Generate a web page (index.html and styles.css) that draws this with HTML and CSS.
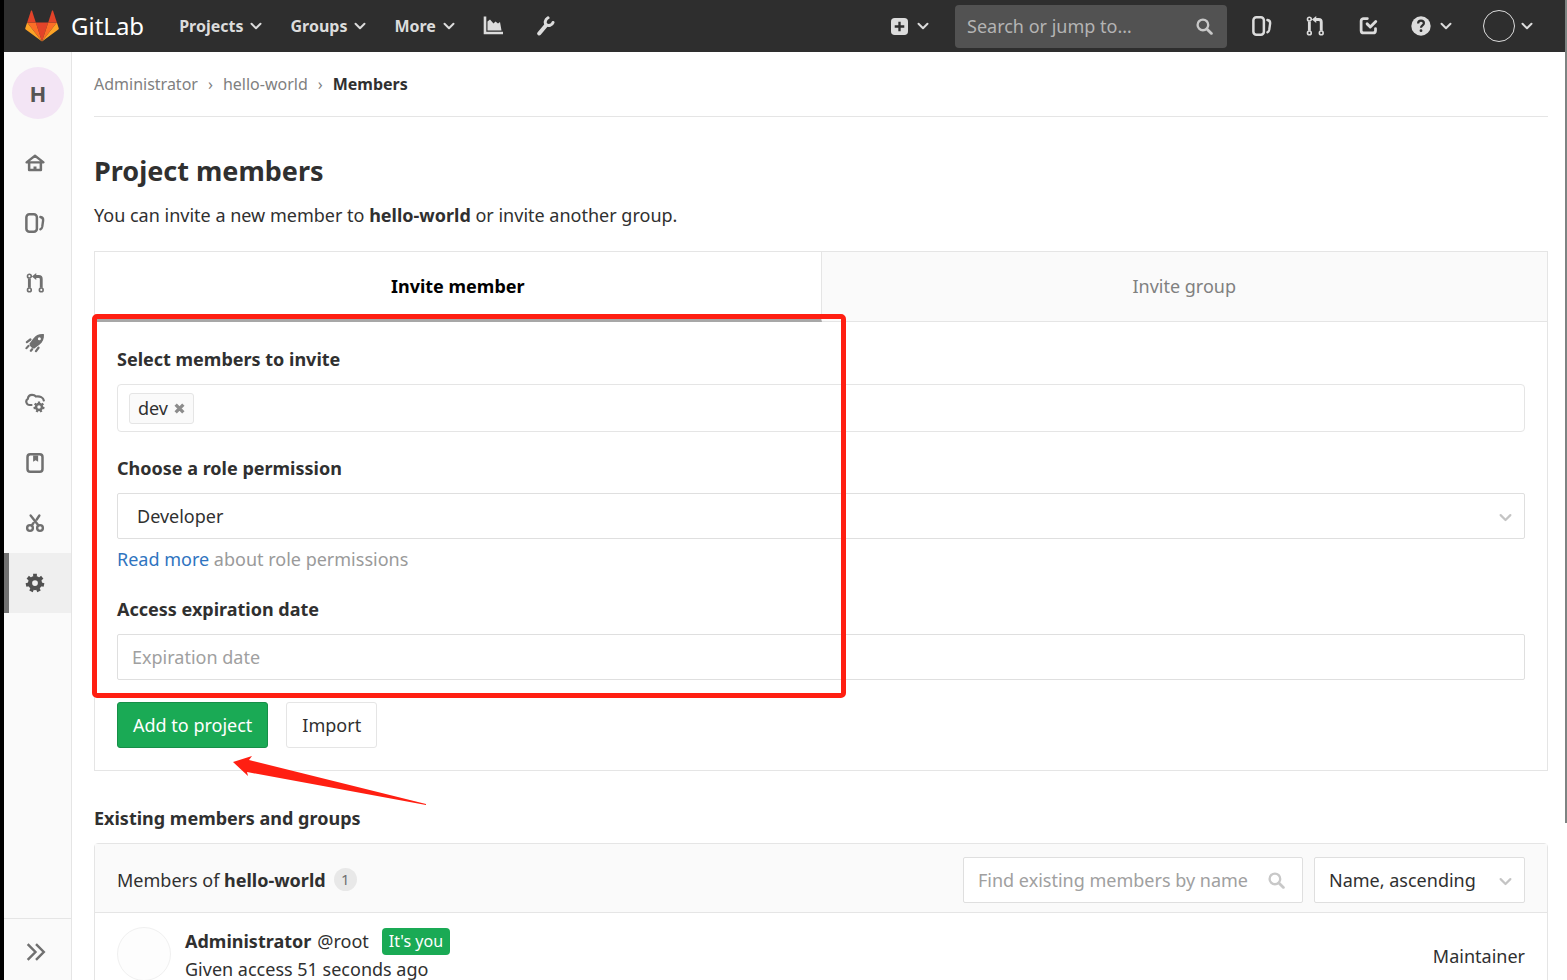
FILE: index.html
```
<!DOCTYPE html>
<html lang="en">
<head>
<meta charset="utf-8">
<title>Members · hello-world · GitLab</title>
<link rel="stylesheet" href="styles.css">
</head>
<body>
<svg class="sprite" aria-hidden="true">
  <symbol id="chevron" viewBox="0 0 12 12"><path d="M1.500 3.800 6 8.300l4.500-4.500" fill="none" stroke="currentColor" stroke-width="2" stroke-linecap="round" stroke-linejoin="round"/></symbol>
  <symbol id="issues" viewBox="0 0 16 16"><rect x="1.100" y="1" width="8.400" height="14" rx="2.400" fill="none" stroke="currentColor" stroke-width="2"/><path d="M12.300 3.200c1.500.3 2.400 1.200 2.200 2.800l-.7 4.900c-.2 1.200-.7 1.900-1.500 2.200" fill="none" stroke="currentColor" stroke-width="1.900" stroke-linecap="round"/></symbol>
  <symbol id="merge" viewBox="0 0 16 16"><g fill="none" stroke="currentColor"><circle cx="3.500" cy="2.500" r="1.500" stroke-width="1.300"/><circle cx="3.500" cy="13.500" r="1.500" stroke-width="1.300"/><circle cx="13" cy="13.500" r="1.500" stroke-width="1.300"/><path d="M3.500 4.300v7.400M8 2.800h3A2 2 0 0 1 13 4.800v6.900" stroke-width="2.300"/></g><path d="M5.500 2.800 9 0v5.600z" fill="currentColor"/></symbol>
  <symbol id="search" viewBox="0 0 16 16"><circle cx="6.500" cy="6.500" r="5" fill="none" stroke="currentColor" stroke-width="2.200"/><path d="m10.500 10.500 4 4" stroke="currentColor" stroke-width="2.600" stroke-linecap="round"/></symbol>
  <symbol id="gear" viewBox="0 0 16 16"><g fill="none" stroke="currentColor"><circle cx="8" cy="8" r="4" stroke-width="3.400"/><path d="M8 3V.6M11.900 4.900l1.900-1.500M12.900 9.100l2.300.5M10.200 12.500l1 2.200M5.800 12.500l-1 2.200M3.100 9.100l-2.300.5M4.100 4.900 2.200 3.400" stroke-width="3"/></g></symbol>
</svg>

<header class="topbar">
  <a class="brand" href="#">
    <svg class="brand-logo" viewBox="0 0 36 34" aria-hidden="true">
      <path fill="#e24329" d="m18 33.500 6.600-20.300H11.400z"/>
      <path fill="#fc6d26" d="M18 33.500 11.400 13.200H2.200z"/>
      <path fill="#fca326" d="m2.200 13.200-2 6.100c-.2.600 0 1.200.5 1.500L18 33.500z"/>
      <path fill="#e24329" d="M2.200 13.200h9.200L7.500 1.100c-.2-.6-1.100-.6-1.300 0z"/>
      <path fill="#fc6d26" d="m18 33.500 6.600-20.300h9.200z"/>
      <path fill="#fca326" d="m33.800 13.200 2 6.100c.2.600 0 1.200-.5 1.500L18 33.500z"/>
      <path fill="#e24329" d="M33.800 13.200h-9.200l3.900-12.100c.2-.6 1.100-.6 1.300 0z"/>
    </svg>
    <span class="brand-name">GitLab</span>
  </a>
  <nav class="main-nav" aria-label="Main">
    <button class="nav-button" type="button">Projects <svg class="caret"><use href="#chevron"/></svg></button>
    <button class="nav-button" type="button">Groups <svg class="caret"><use href="#chevron"/></svg></button>
    <button class="nav-button" type="button">More <svg class="caret"><use href="#chevron"/></svg></button>
    <a class="nav-icon" href="#" aria-label="Instance statistics"><svg class="icon" viewBox="0 0 20 20"><path d="M2 .5v16.500h18" fill="none" stroke="currentColor" stroke-width="2.600"/><path fill="currentColor" d="M4.500 14.500v-9L7 3.500l3.500 4 2-2 2.500 2 2-1.500 1.500 8.500z"/></svg></a>
    <a class="nav-icon" href="#" aria-label="Admin area"><svg class="icon" viewBox="0 0 20 20"><g fill="none" stroke="currentColor" stroke-linecap="round"><path d="m10.500 10-6.300 7.500" stroke-width="4"/><path d="M13 1.800C10 3.500 9.400 7.300 11.400 8.800c2 1.500 5.600.6 6.600-2.300" stroke-width="3"/></g></svg></a>
  </nav>
  <div class="tools">
    <button class="tool-button" type="button" aria-label="New"><svg class="icon-new" viewBox="0 0 16 16"><path fill="currentColor" fill-rule="evenodd" d="M3.500 0h9A3.500 3.500 0 0 1 16 3.500v9a3.500 3.500 0 0 1-3.500 3.500h-9A3.500 3.500 0 0 1 0 12.500v-9A3.500 3.500 0 0 1 3.500 0zM6.900 3.500v3.400H3.500v2.200h3.400v3.400h2.200V9.100h3.400V6.900H9.100V3.500z"/></svg><svg class="caret"><use href="#chevron"/></svg></button>
    <div class="top-search">
      <input class="top-search-input" type="text" placeholder="Search or jump to…" aria-label="Search or jump to">
      <svg class="search-icon"><use href="#search"/></svg>
    </div>
    <a class="tool-link" href="#" aria-label="Issues"><svg class="icon"><use href="#issues"/></svg></a>
    <a class="tool-link" href="#" aria-label="Merge requests"><svg class="icon"><use href="#merge"/></svg></a>
    <a class="tool-link" href="#" aria-label="To-dos"><svg class="icon" viewBox="0 0 16 16"><path d="M7.500 2H4.500a2 2 0 0 0-2 2v7.500a2 2 0 0 0 2 2h7.500a2 2 0 0 0 2-2V10" fill="none" stroke="currentColor" stroke-width="2.200" stroke-linecap="round"/><path d="m7.300 6.300 2.500 2.500 4.400-4.400" fill="none" stroke="currentColor" stroke-width="2.300" stroke-linecap="round" stroke-linejoin="round"/></svg></a>
    <button class="tool-button help" type="button" aria-label="Help"><svg class="icon" viewBox="0 0 20 20"><circle cx="10" cy="10" r="9.700" fill="currentColor"/><path d="M7.100 7.600c0-1.800 1.200-2.900 2.900-2.900s2.900 1 2.900 2.600c0 2-2.900 2.200-2.900 4.500" fill="none" stroke="#2e2e2e" stroke-width="2.200"/><circle cx="10" cy="14.700" r="1.400" fill="#2e2e2e"/></svg><svg class="caret"><use href="#chevron"/></svg></button>
    <button class="tool-button user" type="button" aria-label="User menu"><span class="user-avatar"></span><svg class="caret"><use href="#chevron"/></svg></button>
  </div>
</header>

<div class="layout">
  <aside class="sidebar">
    <a class="project-avatar" href="#" aria-label="hello-world">H</a>
    <nav class="side-nav" aria-label="Project">
      <a class="side-link" href="#" aria-label="Project"><svg class="icon" viewBox="0 0 16 16"><path d="M1.200 7.500 8 2.200l6.800 5.300z" fill="none" stroke="currentColor" stroke-width="1.800" stroke-linejoin="round"/><path d="M3.300 7.500V13.600h9.400V7.500" fill="none" stroke="currentColor" stroke-width="2" stroke-linejoin="round"/><path d="M6.800 10.800h2.400v3H6.800z" fill="currentColor"/></svg></a>
      <a class="side-link" href="#" aria-label="Issues"><svg class="icon"><use href="#issues"/></svg></a>
      <a class="side-link" href="#" aria-label="Merge requests"><svg class="icon"><use href="#merge"/></svg></a>
      <a class="side-link" href="#" aria-label="CI / CD"><svg class="icon" viewBox="0 0 16 16"><path fill="currentColor" fill-rule="evenodd" d="M15.200.9C11.500.5 8.800 1.700 6.700 4.300L3.500 8.500c.3 1.800 1.900 3.600 3.700 4l4.300-3.200c2.700-2 3.900-4.700 3.700-8.400zM11.500 3.400a1.200 1.200 0 1 0 0 2.400 1.200 1.200 0 0 0 0-2.400z"/><path d="M4.300 5.200 1.500 7.300M10.800 11.800l-2 2.700M2.800 10.300l-1.600 1.800M5.700 13l-1 1.200" fill="none" stroke="currentColor" stroke-width="1.800" stroke-linecap="round"/></svg></a>
      <a class="side-link" href="#" aria-label="Operations"><svg class="icon" viewBox="0 0 20 20"><path d="M6.500 12H5A3.400 3.400 0 0 1 2.800 5.800C3.200 3 5 1.800 7 1.800c1.700 0 3 .6 4 1.700 4-.7 7.300 1 7.800 4" fill="none" stroke="currentColor" stroke-width="2.200" stroke-linecap="round"/><svg x="8" y="8" width="12" height="12"><use href="#gear"/></svg></svg></a>
      <a class="side-link" href="#" aria-label="Wiki"><svg class="icon" viewBox="0 0 16 16"><rect x="2" y="1" width="12" height="14" rx="2.200" fill="none" stroke="currentColor" stroke-width="2"/><path d="M6.500 2h4v5L8.500 5.700 6.500 7z" fill="currentColor"/></svg></a>
      <a class="side-link" href="#" aria-label="Snippets"><svg class="icon" viewBox="0 0 16 16"><g fill="none" stroke="currentColor" stroke-width="1.900" stroke-linecap="round"><circle cx="4" cy="12" r="2.300"/><circle cx="12" cy="12" r="2.300"/><path d="m4.500 2 6.300 8M11.500 2 9.400 5.200M6.800 8l-1.500 2"/></g></svg></a>
      <a class="side-link active" href="#" aria-label="Settings" aria-current="page"><svg class="icon"><use href="#gear"/></svg></a>
    </nav>
    <button class="sidebar-toggle" type="button" aria-label="Expand sidebar"><svg class="icon" viewBox="0 0 18 18"><path d="m1.500 2 7 7-7 7M9 2l7 7-7 7" fill="none" stroke="currentColor" stroke-width="2.200"/></svg></button>
  </aside>

  <main class="content">
    <nav class="breadcrumbs" aria-label="Breadcrumb">
      <a class="crumb" href="#">Administrator</a>
      <span class="crumb-sep">›</span>
      <a class="crumb" href="#">hello-world</a>
      <span class="crumb-sep">›</span>
      <a class="crumb current" href="#">Members</a>
    </nav>

    <h1 class="page-title">Project members</h1>
    <p class="intro">You can invite a new member to <strong>hello-world</strong> or invite another group.</p>

    <section class="invite">
      <div class="tabs" role="tablist">
        <button class="tab selected" type="button" role="tab" aria-selected="true">Invite member</button>
        <button class="tab" type="button" role="tab" aria-selected="false">Invite group</button>
      </div>
      <form class="invite-form">
        <div class="field">
          <label class="label" for="members">Select members to invite</label>
          <div class="token-box">
            <span class="token">dev <button class="token-remove" type="button" aria-label="Remove dev"><svg class="token-x" viewBox="0 0 10 10"><path d="m1.500 1.500 7 7m0-7-7 7" stroke="currentColor" stroke-width="3"/></svg></button></span>
            <input class="token-input" id="members" type="text">
          </div>
        </div>
        <div class="field">
          <label class="label" for="role">Choose a role permission</label>
          <div class="select-wrap">
            <select class="control role-select" id="role"><option>Developer</option></select>
            <svg class="select-caret"><use href="#chevron"/></svg>
          </div>
          <p class="help-text"><a class="link" href="#">Read more</a> about role permissions</p>
        </div>
        <div class="field">
          <label class="label" for="expires">Access expiration date</label>
          <input class="control" id="expires" type="text" placeholder="Expiration date">
        </div>
        <div class="actions">
          <button class="button primary" type="button">Add to project</button>
          <button class="button" type="button">Import</button>
        </div>
      </form>
      <div class="highlight-box"></div>
      <svg class="highlight-arrow" viewBox="0 0 194 52" aria-hidden="true"><path fill="#ff1f12" d="M0 7 19 1l-3 4 177 44v1L14 17l1 4z"/></svg>
    </section>

    <h2 class="section-title">Existing members and groups</h2>
    <section class="members">
      <div class="members-header">
        <span class="members-title">Members of <strong>hello-world</strong></span>
        <span class="count">1</span>
        <div class="member-search">
          <input class="control" type="text" placeholder="Find existing members by name" aria-label="Find existing members by name">
          <svg class="search-icon"><use href="#search"/></svg>
        </div>
        <div class="select-wrap sort">
          <select class="control" aria-label="Sort by"><option>Name, ascending</option></select>
          <svg class="select-caret"><use href="#chevron"/></svg>
        </div>
      </div>
      <div class="member">
        <span class="member-avatar"></span>
        <div class="member-info">
          <div class="member-line"><a class="member-name" href="#">Administrator</a> <span>@root</span> <span class="badge">It's you</span></div>
          <div class="member-line">Given access 51 seconds ago</div>
        </div>
        <span class="member-role">Maintainer</span>
      </div>
    </section>
  </main>
</div>
<div class="scroll-thumb"></div>
</body>
</html>
```

FILE: styles.css
```
* {
  box-sizing: border-box;
}

body {
  margin: 0;
  height: 100vh;
  display: flex;
  flex-direction: column;
  overflow: hidden;
  border-left: 4px solid #000;
  border-right: 2px solid #fff;
  background: #fff;
  color: #303030;
  font: 18px/28px "Noto Sans", "Open Sans", sans-serif;
}

button,
input,
select {
  font: inherit;
  color: inherit;
}

button {
  padding: 0;
  border: 0;
  background: none;
}

a {
  color: inherit;
  text-decoration: none;
}

h1,
h2,
p {
  margin: 0;
}

strong {
  font-weight: 700;
}

.sprite {
  display: none;
}

.icon {
  width: 20px;
  height: 20px;
}

.caret {
  width: 12px;
  height: 12px;
}

/* Top bar */
.topbar {
  flex: none;
  display: flex;
  align-items: center;
  height: 52px;
  padding: 0 32px 0 21px;
  background: #2e2e2e;
  color: #dcdcdc;
}

.brand {
  display: flex;
  align-items: center;
  gap: 12px;
  color: #fff;
}

.brand-logo {
  width: 34px;
  height: 32px;
}

.brand-name {
  font-size: 24px;
}

.main-nav {
  display: flex;
  align-items: center;
  gap: 28px;
  margin-left: 35px;
}

.nav-button {
  display: flex;
  align-items: center;
  gap: 7px;
  font-size: 16px;
  font-weight: 700;
}

.nav-icon {
  display: flex;
  margin-right: 4px;
}

.tools {
  display: flex;
  align-items: center;
  margin-left: auto;
}

.tool-button {
  display: flex;
  align-items: center;
  gap: 9px;
}

.icon-new {
  width: 17px;
  height: 17px;
}

.top-search {
  position: relative;
  width: 272px;
  margin: 0 25px 0 26px;
}

.top-search-input {
  width: 100%;
  height: 43px;
  padding: 0 44px 0 12px;
  border: 0;
  border-radius: 4px;
  background: #525252;
}

.top-search-input::placeholder {
  color: #b4b4b4;
  opacity: 1;
}

.search-icon {
  position: absolute;
  top: 13px;
  right: 14px;
  width: 17px;
  height: 17px;
  color: #c8c8c8;
}

.tool-link {
  display: flex;
  margin-right: 33px;
}

.help {
  margin-right: 31px;
}

.user-avatar {
  width: 32px;
  height: 32px;
  border: 1px solid #dcdcdc;
  border-radius: 50%;
}

.user {
  gap: 6px;
}

/* Page frame */
.layout {
  flex: 1;
  min-height: 0;
  display: flex;
}

.sidebar {
  flex: none;
  display: flex;
  flex-direction: column;
  width: 68px;
  border-right: 1px solid #e5e5e5;
  background: #fafafa;
  color: #707070;
}

.project-avatar {
  display: flex;
  align-items: center;
  justify-content: center;
  width: 52px;
  height: 52px;
  margin: 15px 0 14px 8px;
  border-radius: 50%;
  background: #f3e5f5;
  color: #555;
  font-size: 22px;
  font-weight: 700;
}

.side-nav {
  display: flex;
  flex-direction: column;
}

.side-link {
  display: flex;
  align-items: center;
  height: 60px;
  padding-left: 21px;
}

.side-link.active {
  padding-left: 16px;
  border-left: 5px solid #707070;
  background: #efefef;
  color: #505050;
}

.sidebar-toggle {
  display: flex;
  align-items: center;
  height: 62px;
  margin-top: auto;
  padding: 4px 0 0 22px;
  border-top: 1px solid #e5e5e5;
}

.content {
  flex: 1;
  min-width: 0;
  padding: 0 17px 0 22px;
}

/* Heading area */
.breadcrumbs {
  display: flex;
  align-items: center;
  gap: 10px;
  height: 65px;
  border-bottom: 1px solid #e5e5e5;
  color: #808080;
  font-size: 16px;
}

.current {
  color: #303030;
  font-weight: 700;
}

.page-title {
  margin-top: 38px;
  font-size: 27px;
  line-height: 32px;
  font-weight: 700;
}

.intro {
  margin: 14px 0 22px;
}

/* Invite panel */
.invite {
  position: relative;
  border: 1px solid #e5e5e5;
}

.tabs {
  display: flex;
  height: 70px;
}

.tab {
  flex: 1;
  padding-bottom: 2px;
  border-bottom: 1px solid #e5e5e5;
  background: #fafafa;
  color: #808080;
}

.tab.selected {
  padding-bottom: 0;
  border-right: 1px solid #e5e5e5;
  border-bottom: 3px solid #a7a7a7;
  background: #fff;
  color: #000;
  font-weight: 700;
}

.invite-form {
  padding: 23px 22px 22px;
}

.field {
  margin-bottom: 22px;
}

.label {
  display: block;
  margin-bottom: 11px;
  font-weight: 700;
}

.token-box {
  display: flex;
  align-items: center;
  gap: 8px;
  height: 48px;
  padding: 0 11px;
  border: 1px solid #e5e5e5;
  border-radius: 4px;
}

.token {
  display: flex;
  align-items: center;
  gap: 6px;
  height: 31px;
  padding: 0 8px;
  border: 1px solid #e5e5e5;
  border-radius: 3px;
  background: #fafafa;
}

.token-remove {
  display: flex;
}

.token-x {
  width: 11px;
  height: 11px;
  color: #8c8c8c;
}

.token-input {
  flex: 1;
  min-width: 0;
  border: 0;
  outline: 0;
}

.control {
  display: block;
  width: 100%;
  height: 46px;
  padding: 0 14px;
  border: 1px solid #dfdfdf;
  border-radius: 2px;
  background: #fff;
}

.control::placeholder {
  color: #a0a0a0;
  opacity: 1;
}

.select-wrap {
  position: relative;
}

.select-wrap .control {
  appearance: none;
}

.select-wrap .role-select {
  padding-left: 19px;
}

.select-caret {
  position: absolute;
  top: 18px;
  right: 13px;
  width: 13px;
  height: 13px;
  color: #c4c4c4;
  pointer-events: none;
}

.help-text {
  margin-top: 6px;
  color: #9a9a9a;
}

.link {
  color: #2f74c0;
}

.actions {
  display: flex;
  gap: 18px;
}

.button {
  height: 46px;
  padding: 0 15px;
  border: 1px solid #e5e5e5;
  border-radius: 3px;
  background: #fff;
}

.primary {
  border-color: #168f48;
  background: #1aaa55;
  color: #fff;
}

.highlight-box {
  position: absolute;
  top: 62px;
  left: -3px;
  width: 754px;
  height: 384px;
  border: 5px solid #ff1f12;
  border-radius: 5px;
  pointer-events: none;
}

.highlight-arrow {
  position: absolute;
  top: 503px;
  left: 138px;
  width: 194px;
  height: 52px;
  pointer-events: none;
}

/* Members */
.section-title {
  margin: 33px 0 11px;
  font-size: 18px;
  font-weight: 700;
}

.members {
  border: 1px solid #e5e5e5;
  border-radius: 4px;
}

.members-header {
  display: flex;
  align-items: center;
  height: 69px;
  padding: 3px 22px 0;
  border-bottom: 1px solid #e5e5e5;
  background: #fafafa;
}

.count {
  width: 23px;
  height: 23px;
  margin-left: 8px;
  border-radius: 50%;
  background: #e8e8e8;
  color: #707070;
  font-size: 15px;
  line-height: 23px;
  text-align: center;
}

.member-search {
  position: relative;
  width: 340px;
  margin: 0 11px 0 auto;
}

.member-search .search-icon {
  top: 15px;
  right: 18px;
}

.sort {
  width: 211px;
}

.member {
  display: flex;
  padding: 14px 22px;
}

.member-avatar {
  width: 54px;
  height: 54px;
  border: 1px solid #f0f0f0;
  border-radius: 50%;
  background: #fdfdfd;
}

.member-info {
  margin-left: 14px;
}

.member-line {
  display: flex;
  align-items: center;
  gap: 6px;
}

.member-name {
  font-weight: 700;
}

.badge {
  margin-left: 7px;
  padding: 0 7px;
  border-radius: 4px;
  background: #1aaa55;
  color: #fff;
  font-size: 16px;
  line-height: 27px;
}

.member-role {
  margin: 15px 0 0 auto;
}

.scroll-thumb {
  position: absolute;
  top: 0;
  right: 0;
  width: 2px;
  height: 84vh;
  background: #7d8482;
}
```
